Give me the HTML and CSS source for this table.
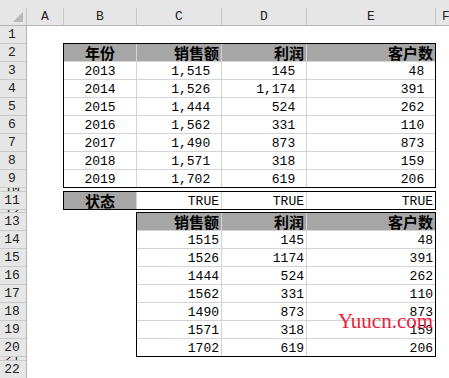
FILE: index.html
```html
<!DOCTYPE html>
<html lang="zh-CN">
<head>
<meta charset="utf-8">
<title>Sheet</title>
<link rel="stylesheet" href="styles.css">
</head>
<body>
<div class="sheet">
  <div class="topstrip"></div>
  <div class="corner"><span class="tri"></span></div>
  <div class="ch">A</div>
  <div class="ch">B</div>
  <div class="ch">C</div>
  <div class="ch">D</div>
  <div class="ch">E</div>
  <div class="ch last">F</div>

  <div class="rh">1</div>
  <div class="rh">2</div>
  <div class="rh">3</div>
  <div class="rh">4</div>
  <div class="rh">5</div>
  <div class="rh">6</div>
  <div class="rh">7</div>
  <div class="rh">8</div>
  <div class="rh">9</div>
  <div class="rh">10</div>
  <div class="rh">11</div>
  <div class="rh">12</div>
  <div class="rh">13</div>
  <div class="rh">14</div>
  <div class="rh">15</div>
  <div class="rh">16</div>
  <div class="rh">17</div>
  <div class="rh">18</div>
  <div class="rh">19</div>
  <div class="rh">20</div>
  <div class="rh">21</div>
  <div class="rh">22</div>

  <div class="tbl t1">
    <div class="c hd ctr">年份</div><div class="c hd r">销售额</div><div class="c hd r">利润</div><div class="c hd r">客户数</div>
    <div class="c ctr">2013</div><div class="c rp">1,515</div><div class="c rp">145</div><div class="c rp">48</div>
    <div class="c ctr">2014</div><div class="c rp">1,526</div><div class="c rp">1,174</div><div class="c rp">391</div>
    <div class="c ctr">2015</div><div class="c rp">1,444</div><div class="c rp">524</div><div class="c rp">262</div>
    <div class="c ctr">2016</div><div class="c rp">1,562</div><div class="c rp">331</div><div class="c rp">110</div>
    <div class="c ctr">2017</div><div class="c rp">1,490</div><div class="c rp">873</div><div class="c rp">873</div>
    <div class="c ctr">2018</div><div class="c rp">1,571</div><div class="c rp">318</div><div class="c rp">159</div>
    <div class="c ctr">2019</div><div class="c rp">1,702</div><div class="c rp">619</div><div class="c rp">206</div>
  </div>

  <div class="tbl state">
    <div class="c hd ctr">状态</div><div class="c r">TRUE</div><div class="c r">TRUE</div><div class="c r">TRUE</div>
  </div>

  <div class="tbl t2">
    <div class="c hd r">销售额</div><div class="c hd r">利润</div><div class="c hd r">客户数</div>
    <div class="c r">1515</div><div class="c r">145</div><div class="c r">48</div>
    <div class="c r">1526</div><div class="c r">1174</div><div class="c r">391</div>
    <div class="c r">1444</div><div class="c r">524</div><div class="c r">262</div>
    <div class="c r">1562</div><div class="c r">331</div><div class="c r">110</div>
    <div class="c r">1490</div><div class="c r">873</div><div class="c r">873</div>
    <div class="c r">1571</div><div class="c r">318</div><div class="c r">159</div>
    <div class="c r">1702</div><div class="c r">619</div><div class="c r">206</div>
  </div>
</div>
<div class="watermark">Yuucn.com</div>
</body>
</html>
```

FILE: styles.css
```css
* { box-sizing: border-box; margin: 0; padding: 0; }
html, body { background: #ffffff; }
body {
  width: 449px;
  height: 378px;
  overflow: hidden;
  position: relative;
  font-family: "Liberation Mono", "Noto Sans CJK SC", monospace;
  color: #000;
}
.sheet {
  display: grid;
  grid-template-columns: 27px 37px 73px 85px 85px 129px 1fr;
  grid-template-rows: 8px 18px 18px repeat(8, 18px) 4px 18px 3px repeat(8, 18px) 4px 18px 1fr;
  height: 378px;
}
.topstrip {
  grid-row: 1;
  grid-column: 1 / -1;
  background: #e6e6e6;
}
.corner {
  grid-row: 2;
  grid-column: 1;
  background: #e6e6e6;
  border-right: 1px solid #c6c6c6;
  border-bottom: 1px solid #b4b4b4;
  display: flex;
  align-items: flex-end;
  justify-content: flex-end;
  padding: 0 3px 3px 0;
}
.tri {
  width: 0;
  height: 0;
  border-left: 10px solid transparent;
  border-bottom: 10px solid #b9b9b9;
}
.ch {
  grid-row: 2;
  background: #e6e6e6;
  border-right: 1px solid #c6c6c6;
  border-bottom: 1px solid #b4b4b4;
  font-size: 13px;
  line-height: 17px;
  text-align: center;
  color: #222;
  overflow: hidden;
}
.ch.last {
  border-right: none;
  text-align: left;
  padding-left: 6px;
}
.rh {
  grid-column: 1;
  background: #e6e6e6;
  border-right: 1px solid #b4b4b4;
  border-bottom: 1px solid #c9c9c9;
  font-size: 13px;
  color: #222;
  display: flex;
  align-items: center;
  justify-content: center;
  overflow: hidden;
  padding-right: 2px;
}
.tbl {
  display: grid;
  gap: 1px;
  background: #d4d4d4;
  border: 1px solid #000;
  margin: -1px 0 0 -1px;
  align-self: start;
  justify-self: start;
}
.t1 {
  grid-column: 3 / 7;
  grid-row: 4 / 12;
  grid-template-columns: 72px 84px 84px 128px;
  grid-template-rows: repeat(8, 17px);
  width: 373px;
  height: 145px;
}
.state {
  grid-column: 3 / 7;
  grid-row: 13;
  grid-template-columns: 72px 84px 84px 128px;
  grid-template-rows: 17px;
  width: 373px;
  height: 19px;
}
.t2 {
  grid-column: 4 / 7;
  grid-row: 15 / 23;
  grid-template-columns: 84px 84px 128px;
  grid-template-rows: repeat(8, 17px);
  width: 300px;
  height: 145px;
}
.c {
  background: #ffffff;
  font-size: 13px;
  line-height: 15px;
  padding-top: 2px;
  white-space: nowrap;
  overflow: hidden;
}
.hd {
  background: #a6a6a6;
  font-family: "Noto Sans CJK SC", sans-serif;
  font-weight: 700;
  font-size: 15px;
  line-height: 16px;
  padding-top: 1px;
  color: #000;
}
.ctr { text-align: center; }
.r { text-align: right; padding-right: 2px; }
.rp { text-align: right; padding-right: calc(3px + 1ch); }
.watermark {
  position: absolute;
  left: 338px;
  top: 311px;
  font-family: "Liberation Serif", serif;
  font-size: 21px;
  line-height: 21px;
  color: #e8203c;
  white-space: nowrap;
}
```
